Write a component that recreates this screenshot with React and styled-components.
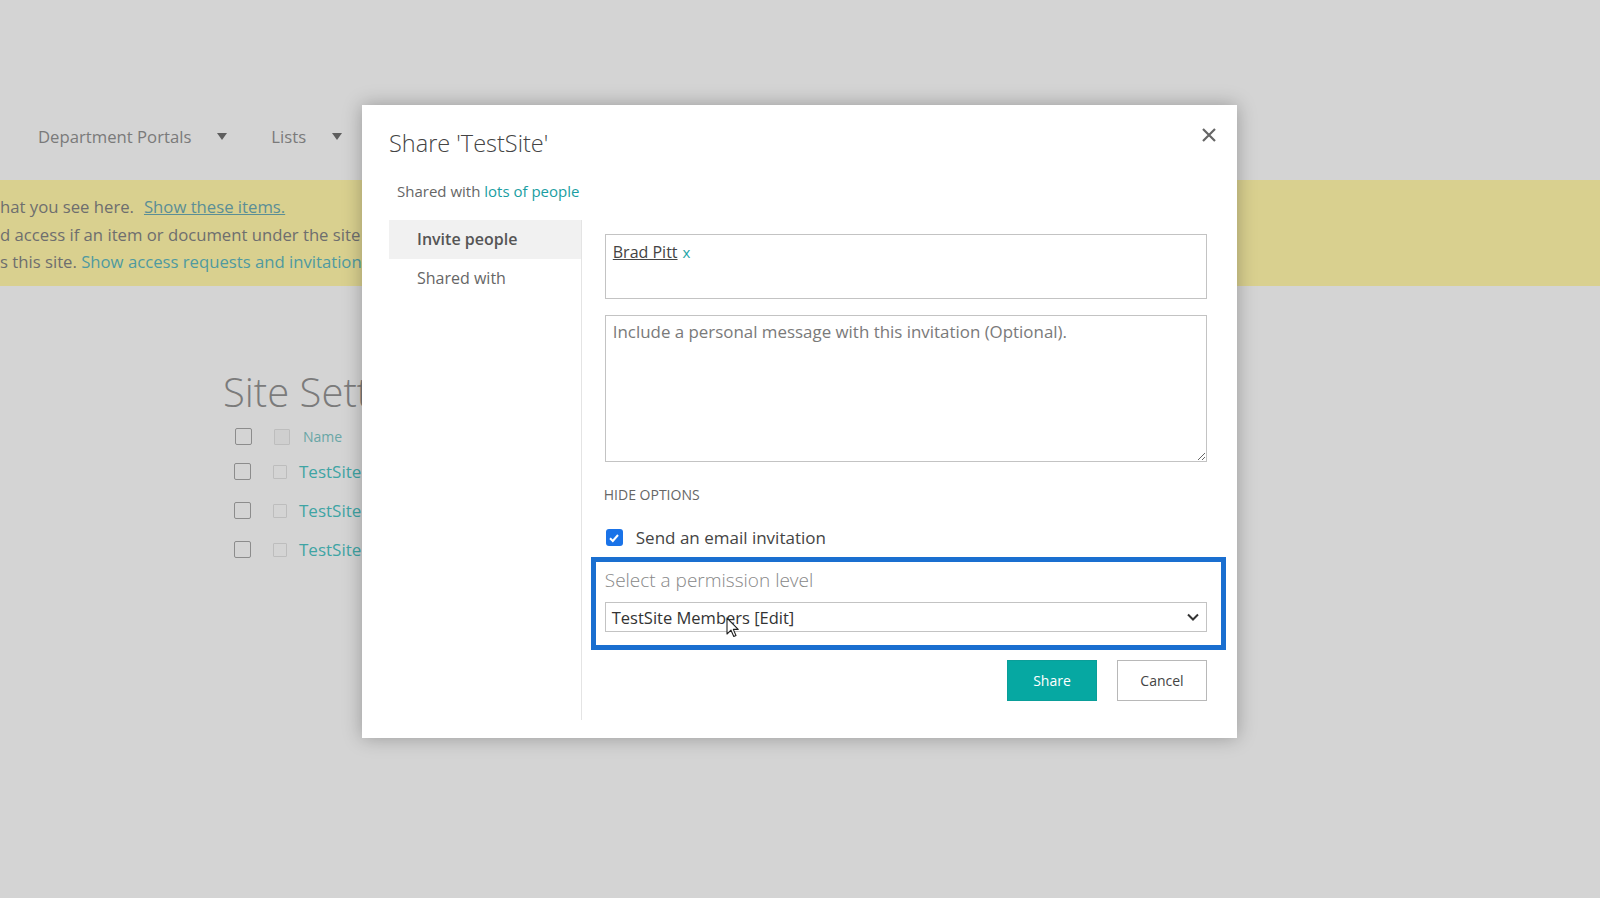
import React from "react";
import styled, { createGlobalStyle } from "styled-components";

const GlobalStyle = createGlobalStyle`
  html, body {
    margin: 0;
    padding: 0;
  }
  body {
    font-family: "Open Sans", "Noto Sans", sans-serif;
    background: #d4d4d4;
  }
`;

const Page = styled.div`
  position: relative;
  width: 1600px;
  height: 898px;
  overflow: hidden;
  background: #d4d4d4;
  color: #747474;
`;

const TopNav = styled.nav`
  display: flex;
  align-items: center;
  height: 26px;
  margin: 0;
  padding: 123px 0 31px 38px;
`;

const NavItem = styled.div`
  display: flex;
  align-items: center;
  gap: 26px;
  margin-right: 44px;
  font-size: 16.7px;
  color: #7a7a7a;
`;

const Caret = styled.span`
  width: 0;
  height: 0;
  border-left: 5px solid transparent;
  border-right: 5px solid transparent;
  border-top: 7px solid #5e5e5e;
`;

const Notice = styled.div`
  height: 106px;
  box-sizing: border-box;
  padding-top: 13px;
  background: #d9d08f;
  font-size: 16.7px;
  line-height: 27.5px;
  color: #6e6e6e;
  white-space: nowrap;
`;

const NoticeLink = styled.span`
  color: ${(p) => (p.$underline ? "#5b8e96" : "#4f9aa0")};
  text-decoration: ${(p) => (p.$underline ? "underline" : "none")};
  margin-left: ${(p) => p.$gap || 0}px;
`;

const SiteSection = styled.section`
  padding: 82px 0 0 223px;
`;

const SiteTitle = styled.h1`
  margin: 0;
  font-size: 40px;
  line-height: 48px;
  font-weight: 300;
  color: #7b7b7b;
`;

const List = styled.div`
  margin-top: 5px;
`;

const ListRow = styled.div`
  display: flex;
  align-items: center;
  height: ${(p) => (p.$header ? 31 : 39)}px;
  margin-left: ${(p) => (p.$header ? 12 : 11)}px;
`;

const BigCheck = styled.span`
  width: 15px;
  height: 15px;
  border: 1.5px solid #8c8c8c;
  border-radius: 2px;
  margin-right: 22px;
`;

const SmallCheck = styled.span`
  width: ${(p) => (p.$header ? 14 : 12)}px;
  height: ${(p) => (p.$header ? 14 : 12)}px;
  border: 1px solid #bdbdbd;
  background: ${(p) => (p.$header ? "#cfcfcf" : "transparent")};
  border-radius: 1px;
  margin-right: ${(p) => (p.$header ? 13 : 12)}px;
`;

const ListText = styled.span`
  color: ${(p) => (p.$header ? "#69a6a6" : "#3fa4a4")};
  font-size: ${(p) => (p.$header ? 14 : 17)}px;
`;

const Dialog = styled.div`
  position: absolute;
  left: 362px;
  top: 105px;
  width: 875px;
  box-sizing: border-box;
  background: #ffffff;
  box-shadow: 0 0 18px rgba(0, 0, 0, 0.28);
  padding: 22px 20px 18px 27px;
`;

const DialogHeader = styled.div`
  display: flex;
  justify-content: space-between;
  align-items: flex-start;
`;

const DialogTitle = styled.h2`
  margin: 0;
  font-size: 23.5px;
  line-height: 32px;
  font-weight: 300;
  color: #444444;
`;

const CloseButton = styled.button`
  width: 16px;
  height: 16px;
  padding: 0;
  border: none;
  background: none;
  display: flex;
`;

const SharedLine = styled.div`
  margin: 22px 0 0 8px;
  font-size: 15px;
  line-height: 20px;
  color: #666666;
`;

const TealLink = styled.span`
  color: #1a9ea2;
`;

const DialogBody = styled.div`
  display: flex;
  margin-top: 19px;
`;

const SideNav = styled.div`
  width: 192px;
  border-right: 1px solid #e4e4e4;
`;

const SideItem = styled.div`
  height: 39px;
  line-height: 39px;
  padding-left: 28px;
  background: ${(p) => (p.$active ? "#f1f1f1" : "transparent")};
  font-size: 16px;
  font-weight: ${(p) => (p.$active ? 600 : 400)};
  color: ${(p) => (p.$active ? "#555555" : "#666666")};
`;

const Content = styled.div`
  width: 603px;
  padding: 14px 10px 19px 23px;
  display: flex;
  flex-direction: column;
`;

const PeopleBox = styled.div`
  border: 1px solid #c3c3c3;
  padding: 6px 7px;
  box-sizing: border-box;
  height: 65px;
  font-size: 16px;
  line-height: 22px;
`;

const Person = styled.span`
  color: #444444;
  text-decoration: underline;
`;

const RemovePerson = styled.span`
  color: #1fa5a8;
  margin-left: 5px;
  font-size: 15px;
`;

const MessageBox = styled.textarea`
  margin-top: 16px;
  height: 147px;
  box-sizing: border-box;
  border: 1px solid #c3c3c3;
  padding: 5px 7px;
  font-family: inherit;
  font-size: 16.9px;
  line-height: 22px;
  resize: vertical;
  &::placeholder {
    color: #7a7a7a;
  }
`;

const OptionsToggle = styled.div`
  margin-top: 23px;
  font-size: 14px;
  line-height: 20px;
  color: #666666;
  margin-left: -1px;
`;

const CheckRow = styled.label`
  display: flex;
  align-items: center;
  gap: 13px;
  margin-top: 24px;
  margin-left: 1px;
  font-size: 17px;
  line-height: 17px;
  color: #444444;
`;

const CheckBox = styled.span`
  width: 17px;
  height: 17px;
  border-radius: 3px;
  background: #1a73e8;
  display: flex;
  align-items: center;
  justify-content: center;
`;

const Highlight = styled.div`
  margin: 11px -19px 0 -14px;
  border: 5px solid #1a6fd0;
  padding: 5px 14px 13px 9px;
`;

const SelectLabel = styled.div`
  font-size: 19px;
  line-height: 27px;
  font-weight: 300;
  color: #888888;
  margin-bottom: 8px;
`;

const SelectBox = styled.div`
  position: relative;
  height: 30px;
  box-sizing: border-box;
  border: 1px solid #c3c3c3;
  display: flex;
  align-items: center;
  justify-content: space-between;
  padding: 0 6px 0 6px;
  font-size: 16.5px;
  color: #333333;
`;

const Cursor = styled.svg`
  position: absolute;
  left: 120px;
  top: 14px;
`;

const Buttons = styled.div`
  display: flex;
  justify-content: flex-end;
  gap: 20px;
  margin-top: 10px;
`;

const Button = styled.button`
  width: 90px;
  height: 41px;
  font-family: inherit;
  font-size: 14px;
  border: 1px solid ${(p) => (p.$primary ? "#0a9e99" : "#b8b8b8")};
  background: ${(p) => (p.$primary ? "#06a8a2" : "#ffffff")};
  color: ${(p) => (p.$primary ? "#ffffff" : "#444444")};
`;

const App = () => {
  return (
    <Page>
      <GlobalStyle />
      <TopNav>
        <NavItem>
          Department Portals <Caret />
        </NavItem>
        <NavItem>
          Lists <Caret />
        </NavItem>
      </TopNav>
      <Notice>
        <div>
          hat you see here.
          <NoticeLink $underline $gap={10}>
            Show these items.
          </NoticeLink>
        </div>
        <div>d access if an item or document under the site</div>
        <div>
          s this site. <NoticeLink>Show access requests and invitations</NoticeLink>
        </div>
      </Notice>
      <SiteSection>
        <SiteTitle>Site Settings</SiteTitle>
        <List>
          <ListRow $header>
            <BigCheck />
            <SmallCheck $header />
            <ListText $header>Name</ListText>
          </ListRow>
          {[1, 2, 3].map((i) => (
            <ListRow key={i}>
              <BigCheck />
              <SmallCheck />
              <ListText>TestSite</ListText>
            </ListRow>
          ))}
        </List>
      </SiteSection>

      <Dialog>
        <DialogHeader>
          <DialogTitle>Share 'TestSite'</DialogTitle>
          <CloseButton aria-label="Close">
            <svg width="16" height="16" viewBox="0 0 16 16">
              <path d="M2 2 L14 14 M14 2 L2 14" stroke="#666" strokeWidth="2.2" />
            </svg>
          </CloseButton>
        </DialogHeader>
        <SharedLine>
          Shared with <TealLink>lots of people</TealLink>
        </SharedLine>
        <DialogBody>
          <SideNav>
            <SideItem $active>Invite people</SideItem>
            <SideItem>Shared with</SideItem>
          </SideNav>
          <Content>
            <PeopleBox>
              <Person>Brad Pitt</Person>
              <RemovePerson>x</RemovePerson>
            </PeopleBox>
            <MessageBox placeholder="Include a personal message with this invitation (Optional)." />
            <OptionsToggle>HIDE OPTIONS</OptionsToggle>
            <CheckRow>
              <CheckBox>
                <svg width="12" height="12" viewBox="0 0 12 12">
                  <path d="M2 6.2 L4.8 9 L10 3" fill="none" stroke="#fff" strokeWidth="2" />
                </svg>
              </CheckBox>
              Send an email invitation
            </CheckRow>
            <Highlight>
              <SelectLabel>Select a permission level</SelectLabel>
              <SelectBox>
                TestSite Members [Edit]
                <svg width="14" height="10" viewBox="0 0 14 10">
                  <path d="M2 2.5 L7 7.5 L12 2.5" fill="none" stroke="#333" strokeWidth="2" />
                </svg>
                <Cursor width="13" height="21" viewBox="0 0 13 21">
                  <path
                    d="M1 1 L1 17 L5 13.2 L7.8 19.5 L10 18.5 L7.3 12.4 L12.2 12.4 Z"
                    fill="#fff"
                    stroke="#222"
                    strokeWidth="1.1"
                    strokeLinejoin="round"
                  />
                </Cursor>
              </SelectBox>
            </Highlight>
            <Buttons>
              <Button $primary>Share</Button>
              <Button>Cancel</Button>
            </Buttons>
          </Content>
        </DialogBody>
      </Dialog>
    </Page>
  );
};

export default App;
